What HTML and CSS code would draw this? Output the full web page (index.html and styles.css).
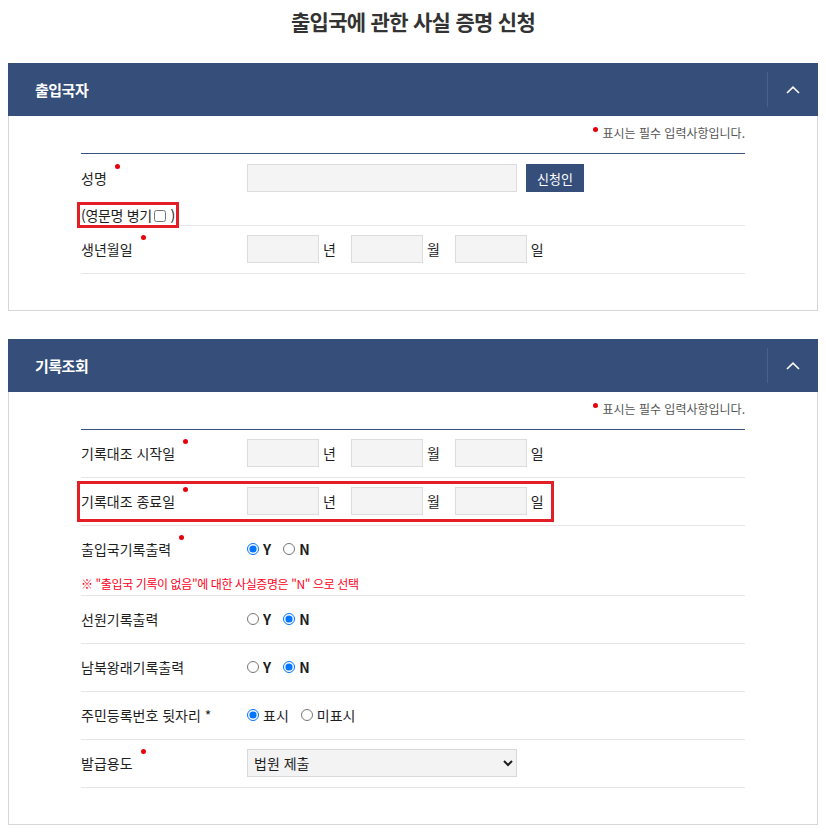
FILE: index.html
```html
<!DOCTYPE html>
<html lang="ko">
<head>
    <meta charset="UTF-8">
    <meta name="viewport" content="width=device-width, initial-scale=1.0">
    <title>출입국에 관한 사실 증명 신청</title>
    <link rel="stylesheet" href="styles.css">
</head>
<body>
    <h1 class="page-title">출입국에 관한 사실 증명 신청</h1>

    <section class="panel">
        <div class="panel-head">
            <h2 class="panel-title">출입국자</h2>
            <button class="panel-toggle" type="button" aria-label="접기">
                <svg width="14" height="8" viewBox="0 0 14 8"><polyline points="1,7 7,1.2 13,7" fill="none" stroke="#fff" stroke-width="1.6"/></svg>
            </button>
        </div>
        <div class="panel-body">
            <p class="req-note"><span class="req-dot"></span>표시는 필수 입력사항입니다.</p>
            <div class="form-table">
                <div class="form-row row-name">
                    <div class="form-label">
                        <span class="req">성명</span>
                        <span class="eng-name">(영문명 병기<input type="checkbox" class="chk"> )</span>
                    </div>
                    <div class="form-field">
                        <input class="inp inp-name" type="text">
                        <button class="btn-navy" type="button">신청인</button>
                    </div>
                </div>
                <div class="form-row">
                    <div class="form-label"><span class="req">생년월일</span></div>
                    <div class="form-field">
                        <input class="inp inp-date" type="text"><span class="unit">년</span>
                        <input class="inp inp-date" type="text"><span class="unit">월</span>
                        <input class="inp inp-date" type="text"><span class="unit">일</span>
                    </div>
                </div>
            </div>
        </div>
    </section>

    <section class="panel">
        <div class="panel-head">
            <h2 class="panel-title">기록조회</h2>
            <button class="panel-toggle" type="button" aria-label="접기">
                <svg width="14" height="8" viewBox="0 0 14 8"><polyline points="1,7 7,1.2 13,7" fill="none" stroke="#fff" stroke-width="1.6"/></svg>
            </button>
        </div>
        <div class="panel-body">
            <p class="req-note"><span class="req-dot"></span>표시는 필수 입력사항입니다.</p>
            <div class="form-table">
                <div class="form-row">
                    <div class="form-label"><span class="req">기록대조 시작일</span></div>
                    <div class="form-field">
                        <input class="inp inp-date" type="text"><span class="unit">년</span>
                        <input class="inp inp-date" type="text"><span class="unit">월</span>
                        <input class="inp inp-date" type="text"><span class="unit">일</span>
                    </div>
                </div>
                <div class="form-row mark">
                    <div class="form-label"><span class="req">기록대조 종료일</span></div>
                    <div class="form-field">
                        <input class="inp inp-date" type="text"><span class="unit">년</span>
                        <input class="inp inp-date" type="text"><span class="unit">월</span>
                        <input class="inp inp-date" type="text"><span class="unit">일</span>
                    </div>
                </div>
                <div class="form-row row-note">
                    <div class="form-label"><span class="req">출입국기록출력</span></div>
                    <div class="form-field">
                        <label class="opt"><input type="radio" name="io" checked><b>Y</b></label>
                        <label class="opt"><input type="radio" name="io"><b>N</b></label>
                    </div>
                    <p class="form-note">※ "출입국 기록이 없음"에 대한 사실증명은 "N" 으로 선택</p>
                </div>
                <div class="form-row">
                    <div class="form-label"><span>선원기록출력</span></div>
                    <div class="form-field">
                        <label class="opt"><input type="radio" name="sea"><b>Y</b></label>
                        <label class="opt"><input type="radio" name="sea" checked><b>N</b></label>
                    </div>
                </div>
                <div class="form-row">
                    <div class="form-label"><span>남북왕래기록출력</span></div>
                    <div class="form-field">
                        <label class="opt"><input type="radio" name="nk"><b>Y</b></label>
                        <label class="opt"><input type="radio" name="nk" checked><b>N</b></label>
                    </div>
                </div>
                <div class="form-row">
                    <div class="form-label"><span>주민등록번호 뒷자리 *</span></div>
                    <div class="form-field">
                        <label class="opt"><input type="radio" name="rrn" checked>표시</label>
                        <label class="opt"><input type="radio" name="rrn">미표시</label>
                    </div>
                </div>
                <div class="form-row">
                    <div class="form-label"><span class="req">발급용도</span></div>
                    <div class="form-field">
                        <select class="sel">
                            <option>법원 제출</option>
                            <option>기타</option>
                        </select>
                    </div>
                </div>
            </div>
        </div>
    </section>
</body>
</html>
```

FILE: styles.css
```css
body {
    margin: 8px;
    font-family: "Noto Sans CJK KR", "Noto Sans", sans-serif;
    color: #222;
    background: #fff;
}
.page-title {
    margin: 0 0 29px;
    font-size: 21px;
    line-height: 26px;
    font-weight: 700;
    letter-spacing: -0.7px;
    text-align: center;
    color: #333;
}
.panel {
    margin-bottom: 28px;
}
.panel-head {
    display: flex;
    align-items: center;
    height: 53px;
    background: #354e7a;
}
.panel-title {
    flex: 1;
    margin: 0;
    padding-left: 27px;
    font-size: 15px;
    font-weight: 700;
    letter-spacing: -0.5px;
    color: #fff;
}
.panel-toggle {
    display: flex;
    align-items: center;
    justify-content: center;
    width: 51px;
    height: 35px;
    padding: 0;
    background: none;
    border: 0;
    border-left: 1px solid #4a6190;
    cursor: pointer;
}
.panel-body {
    border: 1px solid #d6d6d6;
    border-top: 0;
    padding: 8px 72px 36px;
}
.req-note {
    margin: 0 0 11px;
    font-size: 12px;
    line-height: 18px;
    color: #555;
    text-align: right;
}
.req-dot {
    display: inline-block;
    width: 5px;
    height: 5px;
    margin-right: 4px;
    border-radius: 50%;
    background: #e8000b;
    vertical-align: 6px;
}
.form-table {
    border-top: 1px solid #3a5280;
}
.form-row {
    display: grid;
    grid-template-columns: 166px 1fr;
    padding: 9px 0 10px;
    border-bottom: 1px solid #e6e6e6;
    font-size: 14px;
}
.form-row.row-name {
    padding: 10px 0 0;
}
.form-row.row-note {
    padding-bottom: 1px;
}
.form-row.mark {
    position: relative;
}
.form-row.mark::after {
    content: "";
    position: absolute;
    left: -4px;
    top: 3px;
    width: 477px;
    height: 41px;
    border: 3px solid #e41e26;
    box-sizing: border-box;
}
.form-label {
    display: flex;
    flex-direction: column;
    align-items: flex-start;
    line-height: 28px;
    color: #1e1e1e;
}
.req {
    position: relative;
}
.req::after {
    content: "";
    position: absolute;
    left: calc(100% + 8px);
    top: 0;
    width: 5px;
    height: 5px;
    border-radius: 50%;
    background: #e8000b;
}
.eng-name {
    margin: 13px 0 0 -1px;
    padding: 0 1px;
    line-height: 20px;
    letter-spacing: -0.3px;
    outline: 3px solid #e41e26;
}
.chk {
    width: 12px;
    height: 12px;
    margin: 0 1px 0 2px;
    vertical-align: -1px;
}
.form-field {
    display: flex;
    align-items: center;
    height: 28px;
}
.inp {
    box-sizing: border-box;
    height: 28px;
    background: #f4f4f4;
    border: 1px solid #dcdcdc;
    border-radius: 0;
    padding: 0 6px;
}
.inp-name {
    width: 270px;
}
.inp-date {
    width: 72px;
    margin-right: 4px;
}
.unit {
    margin-right: 15px;
    color: #1e1e1e;
}
.btn-navy {
    height: 28px;
    margin-left: 9px;
    padding: 0 11px;
    background: #354e7a;
    border: 0;
    color: #fff;
    font-family: inherit;
    font-size: 13px;
    cursor: pointer;
}
.opt {
    display: flex;
    align-items: center;
    margin-right: 12px;
    color: #1e1e1e;
}
.opt input {
    width: 12px;
    height: 12px;
    margin: 0 4px 0 0;
}
.opt b {
    font-weight: 700;
}
.form-note {
    grid-column: 1 / -1;
    margin: 11px 0 0;
    font-size: 12px;
    line-height: 20px;
    letter-spacing: -0.4px;
    color: #ff0022;
}
.sel {
    box-sizing: border-box;
    width: 270px;
    height: 28px;
    padding: 0 2px;
    background: #f3f3f3;
    border: 1px solid #d9d9d9;
    border-radius: 0;
    font-family: inherit;
    font-size: 14px;
    color: #1e1e1e;
}
```
